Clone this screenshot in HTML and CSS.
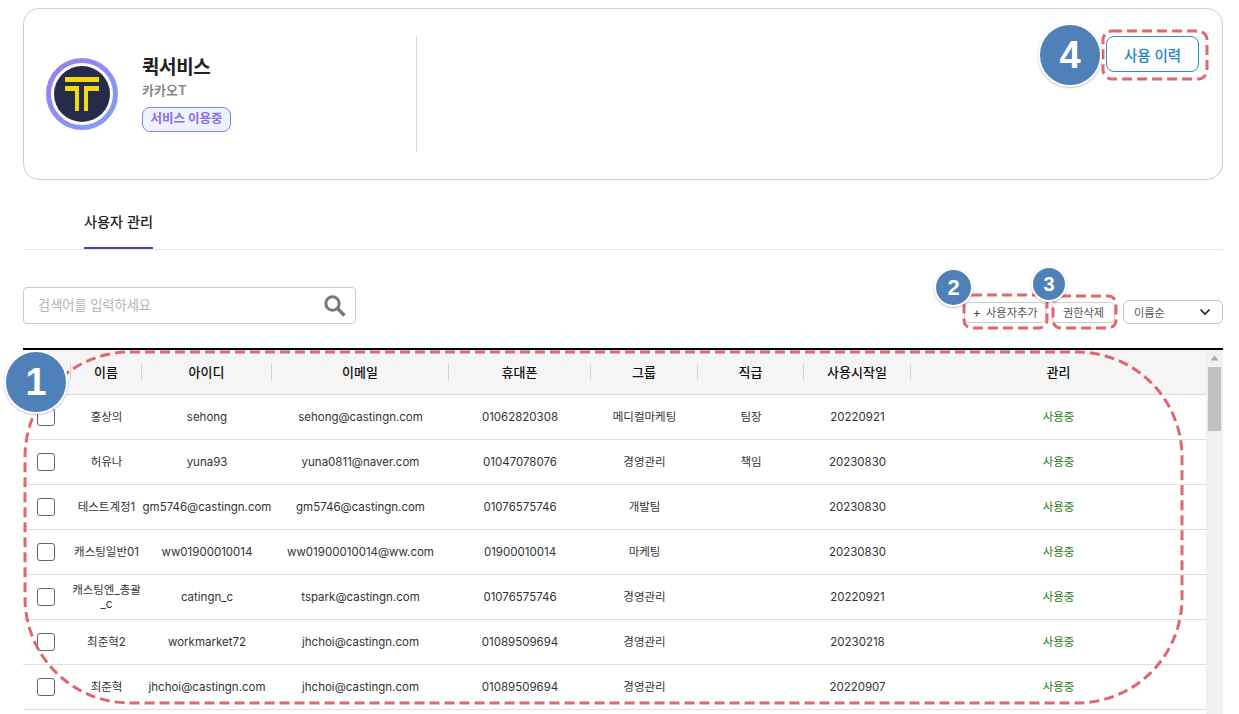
FILE: index.html
```html
<!DOCTYPE html>
<html lang="ko">
<head>
<meta charset="utf-8">
<title>사용자 관리</title>
<link rel="stylesheet" href="styles.css">
</head>
<body>
<div class="page">
  <section class="card">
    <div class="service">
      <svg class="logo" viewBox="0 0 72 72" width="72" height="72">
        <defs>
          <linearGradient id="ring" x1="0" y1="0" x2="1" y2="1">
            <stop offset="0" stop-color="#9a7ff0"/>
            <stop offset="1" stop-color="#7f9dfa"/>
          </linearGradient>
        </defs>
        <circle cx="36" cy="36" r="33.5" fill="#fff" stroke="url(#ring)" stroke-width="5"/>
        <circle cx="36" cy="36" r="28" fill="#262b4a"/>
        <path d="M19 19h34v5H19zM19 28h14v25h-4V33H19zM38 28h15v5H42v20h-4z" fill="#f4d90e"/>
      </svg>
      <div class="service-info">
        <h1 class="service-name">퀵서비스</h1>
        <p class="service-sub">카카오T</p>
        <span class="status-badge">서비스 이용중</span>
      </div>
    </div>
    <button class="history-btn">사용 이력</button>
  </section>

  <nav class="tabs"><a class="tab">사용자 관리</a></nav>

  <div class="toolbar">
    <div class="search">
      <span class="search-text">검색어를 입력하세요</span>
      <svg class="search-icon" viewBox="0 0 22 22" width="22" height="22">
        <circle cx="8.5" cy="8.5" r="6.7" fill="none" stroke="#777" stroke-width="3"/>
        <path d="M13.5 13.5l7 7" stroke="#777" stroke-width="3.2" fill="none"/>
      </svg>
    </div>
    <div class="actions">
      <button class="small-btn add-btn"><span class="plus">+</span>사용자추가</button>
      <button class="small-btn del-btn">권한삭제</button>
      <div class="sort">
        <span>이름순</span>
        <svg viewBox="0 0 12 8" width="12" height="8"><path d="M1.5 1.5L6 6l4.5-4.5" fill="none" stroke="#222" stroke-width="1.6"/></svg>
      </div>
    </div>
  </div>

  <div class="table-wrap">
    <div class="table-scroll">
      <table class="users">
        <colgroup>
          <col class="c-check"><col class="c-name"><col class="c-id"><col class="c-mail"><col class="c-phone"><col class="c-group"><col class="c-rank"><col class="c-date"><col class="c-manage">
        </colgroup>
        <thead>
          <tr>
            <th><div class="th-in"></div></th>
            <th><div class="th-in">이름</div></th>
            <th><div class="th-in">아이디</div></th>
            <th><div class="th-in">이메일</div></th>
            <th><div class="th-in">휴대폰</div></th>
            <th><div class="th-in">그룹</div></th>
            <th><div class="th-in">직급</div></th>
            <th><div class="th-in">사용시작일</div></th>
            <th><div class="th-in last">관리</div></th>
          </tr>
        </thead>
        <tbody>
          <tr><td><span class="check"></span></td><td>홍상의</td><td>sehong</td><td>sehong@castingn.com</td><td>01062820308</td><td>메디컬마케팅</td><td>팀장</td><td>20220921</td><td class="on">사용중</td></tr>
          <tr><td><span class="check"></span></td><td>허유나</td><td>yuna93</td><td>yuna0811@naver.com</td><td>01047078076</td><td>경영관리</td><td>책임</td><td>20230830</td><td class="on">사용중</td></tr>
          <tr><td><span class="check"></span></td><td>테스트계정1</td><td>gm5746@castingn.com</td><td>gm5746@castingn.com</td><td>01076575746</td><td>개발팀</td><td></td><td>20230830</td><td class="on">사용중</td></tr>
          <tr><td><span class="check"></span></td><td>캐스팅일반01</td><td>ww01900010014</td><td>ww01900010014@ww.com</td><td>01900010014</td><td>마케팅</td><td></td><td>20230830</td><td class="on">사용중</td></tr>
          <tr><td><span class="check"></span></td><td>캐스팅엔_총괄<br>_c</td><td>catingn_c</td><td>tspark@castingn.com</td><td>01076575746</td><td>경영관리</td><td></td><td>20220921</td><td class="on">사용중</td></tr>
          <tr><td><span class="check"></span></td><td>최준혁2</td><td>workmarket72</td><td>jhchoi@castingn.com</td><td>01089509694</td><td>경영관리</td><td></td><td>20230218</td><td class="on">사용중</td></tr>
          <tr><td><span class="check"></span></td><td>최준혁</td><td>jhchoi@castingn.com</td><td>jhchoi@castingn.com</td><td>01089509694</td><td>경영관리</td><td></td><td>20220907</td><td class="on">사용중</td></tr>
        </tbody>
      </table>
    </div>
    <div class="scrollbar">
      <svg class="scroll-up" viewBox="0 0 9 6" width="9" height="6"><path d="M4.5 0.5L8.5 5.5H0.5z" fill="#a8a8a8"/></svg>
      <div class="scroll-thumb"></div>
    </div>
  </div>
</div>

<svg class="marks" viewBox="0 0 1239 714" width="1239" height="714">
  <rect class="dash" x="25" y="352" width="1157" height="351" rx="105"/>
  <rect class="dash" x="1103" y="31" width="104" height="48" rx="9"/>
  <rect class="dash" x="964" y="295" width="83" height="33" rx="8"/>
  <rect class="dash" x="1053" y="296" width="63" height="32" rx="8"/>
</svg>
<div class="num num-1">1</div>
<div class="num num-2">2</div>
<div class="num num-3">3</div>
<div class="num num-4">4</div>
</body>
</html>
```
FILE: styles.css
```css
* { box-sizing: border-box; }
html, body { margin: 0; height: 714px; overflow: hidden; background: #fff; }
body {
  font-family: Inter, "Noto Sans CJK KR", sans-serif;
  color: #222;
  position: relative;
}
button { font-family: inherit; background: #fff; cursor: pointer; padding: 0; }
.page { padding: 8px 16px 0 23px; height: 714px; display: flex; flex-direction: column; }

/* service card */
.card {
  height: 172px;
  flex: none;
  border: 1px solid #cfcfcf;
  border-radius: 16px;
  padding: 27px 23px 0 22px;
  display: flex;
  justify-content: space-between;
  align-items: flex-start;
}
.service {
  width: 371px;
  height: 116px;
  border-right: 1px solid #d9d9d9;
  display: flex;
  align-items: center;
  gap: 24px;
}
.logo { flex: none; }
.service-info { display: flex; flex-direction: column; align-items: flex-start; }
.service-name { margin: 0; font-size: 19px; line-height: 26px; font-weight: 700; letter-spacing: -0.4px; color: #222; }
.service-sub { margin: 0 0 7px; font-size: 13px; line-height: 19px; font-weight: 700; color: #8a8a8a; }
.status-badge {
  height: 25px;
  line-height: 22px;
  width: 89px;
  margin-bottom: 1px;
  text-align: center;
  font-size: 12.5px;
  font-weight: 700;
  color: #8a6fe0;
  background: #eef1fe;
  border: 1px solid #7f86dc;
  border-radius: 8px;
}
.history-btn {
  width: 93px;
  height: 36px;
  border: 1px solid #2b8ccc;
  border-radius: 8px;
  color: #1f85c6;
  font-size: 14.5px;
  font-weight: 500;
}

/* tab */
.tabs { flex: none; height: 70px; border-bottom: 1px solid #e6e6e6; padding-left: 61px; }
.tab {
  display: inline-block;
  height: 69px;
  padding-top: 32px;
  line-height: 20px;
  font-size: 14.2px;
  font-weight: 500;
  color: #222;
  border-bottom: 2px solid #4343b5;
}

/* toolbar */
.toolbar { flex: none; height: 98px; display: flex; justify-content: space-between; align-items: flex-start; padding-top: 37px; }
.search {
  width: 333px;
  height: 37px;
  border: 1px solid #cbcbcb;
  border-radius: 4px;
  display: flex;
  align-items: center;
  justify-content: space-between;
  padding: 0 9px 2px 14px;
}
.search-text { font-size: 13.2px; color: #b4b4b4; }
.search-icon { margin-top: 2px; }
.actions { display: flex; align-items: center; margin-top: 13px; }
.small-btn {
  height: 21px;
  border: 1px solid #cfcfcf;
  border-radius: 5px;
  font-size: 11.2px;
  color: #555;
}
.add-btn { width: 82px; margin-right: 6px; }
.plus { margin-right: 5px; font-size: 13px; color: #444; }
.del-btn { width: 63px; margin-right: 8px; }
.sort {
  width: 100px;
  height: 24px;
  border: 1px solid #c4c4c4;
  border-radius: 6px;
  padding: 0 11px 0 10px;
  display: flex;
  align-items: center;
  justify-content: space-between;
  font-size: 11.2px;
  color: #555;
}

/* table */
.table-wrap { flex: 1; min-height: 0; display: flex; border-top: 2px solid #000; overflow: hidden; }
.table-scroll { flex: 1; min-width: 0; }
.users { width: 1183px; table-layout: fixed; border-collapse: separate; border-spacing: 0; }
.c-check { width: 48px; } .c-name { width: 71px; } .c-id { width: 130px; }
.c-mail { width: 177px; } .c-phone { width: 142px; } .c-group { width: 107px; }
.c-rank { width: 106px; } .c-date { width: 107px; } .c-manage { width: 295px; }
.users th {
  height: 45px;
  padding: 0;
  background: #f5f5f5;
  border-bottom: 1px solid #dcdcdc;
  font-size: 13px;
  font-weight: 500;
  color: #111;
}
.th-in { height: 16px; line-height: 16px; border-right: 1px solid #d2d2d2; }
.th-in.last { border-right: 0; }
.users td {
  height: 45px;
  padding: 0;
  border-bottom: 1px solid #dedede;
  text-align: center;
  font-size: 11.5px;
  line-height: 14px;
  color: #333;
}
.users td.on { color: #1b7d22; }
.check {
  display: block;
  width: 18px;
  height: 18px;
  margin-left: 14px;
  border: 1px solid #666;
  border-radius: 3px;
  background: #fff;
}
.scrollbar { flex: none; width: 17px; background: #f1f1f1; padding: 5px 2px 0; display: flex; flex-direction: column; align-items: center; }
.scroll-up { flex: none; }
.scroll-thumb { flex: none; width: 13px; height: 64px; margin-top: 6px; background: #c1c1c1; }

/* annotations */
.marks { position: absolute; left: 0; top: 0; pointer-events: none; }
.dash { fill: none; stroke: #dd5a66; stroke-width: 3; stroke-dasharray: 10 5; opacity: 0.92; }
.num {
  position: absolute;
  border-radius: 50%;
  background: #4f81b8;
  color: #fff;
  font-weight: 700;
  text-align: center;
  border: 2px solid #fff;
  box-shadow: 0 1px 2px rgba(0, 0, 0, 0.25);
  box-sizing: content-box;
  font-family: "Liberation Sans", sans-serif;
}
.num-1 { left: 4px; top: 350px; width: 60px; height: 60px; line-height: 60px; font-size: 38px; }
.num-2 { left: 934px; top: 268px; width: 35px; height: 35px; line-height: 35px; font-size: 22px; }
.num-3 { left: 1031px; top: 266px; width: 32px; height: 32px; line-height: 32px; font-size: 20px; }
.num-4 { left: 1038px; top: 23px; width: 60px; height: 60px; line-height: 60px; font-size: 38px; }
```
